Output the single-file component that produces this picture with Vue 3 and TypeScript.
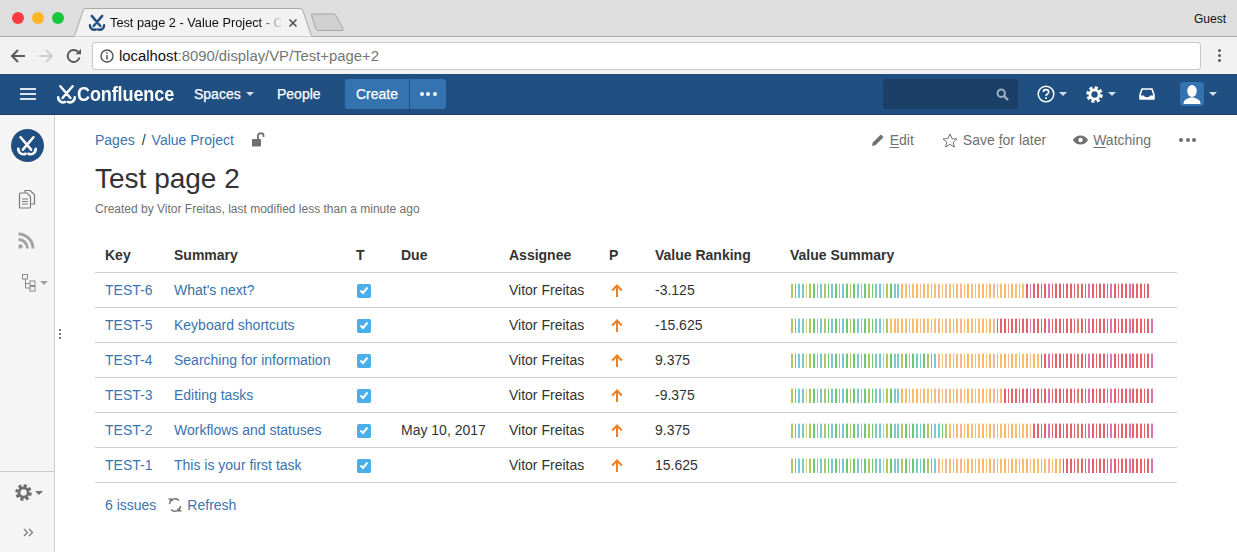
<script setup lang="ts">
const logo = 'M5 2.5 L16.5 16 M19 2.5 L7.5 16 M2.5 15 C2.5 20 7 22 10.5 20.5 M21.5 15 C21.5 20 17 22 13.5 20.5'

interface Issue {
  key: string
  summary: string
  due: string
  rank: string
  green: number
  orange: number
  total: number
}

const issues: Issue[] = [
  { key: 'TEST-6', summary: "What's next?", due: '', rank: '-3.125', green: 30, orange: 64, total: 98 },
  { key: 'TEST-5', summary: 'Keyboard shortcuts', due: '', rank: '-15.625', green: 27, orange: 56, total: 99 },
  { key: 'TEST-4', summary: 'Searching for information', due: '', rank: '9.375', green: 40, orange: 68, total: 99 },
  { key: 'TEST-3', summary: 'Editing tasks', due: '', rank: '-9.375', green: 30, orange: 58, total: 99 },
  { key: 'TEST-2', summary: 'Workflows and statuses', due: 'May 10, 2017', rank: '9.375', green: 43, orange: 66, total: 99 },
  { key: 'TEST-1', summary: 'This is your first task', due: '', rank: '15.625', green: 40, orange: 74, total: 99 },
]

const pattern = [0, 1, 2, 2, 3, 0, 1, 2, 2, 0, 1, 2, 1, 2, 2, 1, 0, 1, 2, 2, 1]
const pinks = new Set([35, 40, 42, 46, 55, 59, 65, 70])
const magentas = new Set([65, 70, 81, 87, 92, 98])

function barClass(issue: Issue, i: number): string {
  if (i < issue.green) return `bar g${pattern[i % pattern.length]}`
  if (i < issue.orange) return pinks.has(i) ? 'bar pink' : `bar o${i % 2}`
  if (magentas.has(i)) return 'bar magenta'
  return i === 78 ? 'bar brick' : `bar r${i % 2}`
}
</script>

<template>
  <div class="window">
    <header class="tabstrip">
      <div class="lights">
        <i class="light red"></i>
        <i class="light amber"></i>
        <i class="light lime"></i>
      </div>
      <div class="tab">
        <svg class="tabshape" width="240" height="29" viewBox="0 0 240 29">
          <path d="M0 28.5 C1 28.5 1.5 27.5 2 26.5 L10 3 C10.6 1.4 11.5 .5 13 .5 H227 C228.5 .5 229.4 1.4 230 3 L238 26.5 C238.5 27.5 239 28.5 240 28.5" fill="#f2f2f2" stroke="#a9a9a9" />
        </svg>
        <svg class="tablogo" width="18" height="18" viewBox="0 0 24 24">
          <path :d="logo" fill="none" stroke="#1f4f84" stroke-width="3.2" stroke-linecap="round" />
        </svg>
        <span class="tabtitle">Test page 2 - Value Project - Confluence</span>
        <svg class="tabclose" width="10" height="10" viewBox="0 0 10 10">
          <path d="M1.5 1.5 L8.5 8.5 M8.5 1.5 L1.5 8.5" stroke="#555" stroke-width="1.7" />
        </svg>
      </div>
      <svg class="newtab" width="36" height="20" viewBox="0 0 36 20">
        <path d="M2.5 1 H24 C25 1 25.5 1.5 26 2.5 L33 15.5 C33.5 17 33 17.5 32 17.5 H8 C7 17.5 6.5 17 6 16 L1.5 2.5 C1.2 1.5 1.5 1 2.5 1 Z" fill="#d0d0d0" stroke="#a5a5a5" />
      </svg>
      <span class="guest">Guest</span>
    </header>

    <div class="toolbar">
      <svg class="tool" width="16" height="16" viewBox="0 0 16 16">
        <path d="M15 8 H2 M8 2 L2 8 L8 14" fill="none" stroke="#5a5a5a" stroke-width="2" />
      </svg>
      <svg class="tool" width="16" height="16" viewBox="0 0 16 16">
        <path d="M1 8 H14 M8 2 L14 8 L8 14" fill="none" stroke="#cfcfcf" stroke-width="2" />
      </svg>
      <svg class="tool" width="16" height="16" viewBox="0 0 16 16">
        <path d="M13.5 9.5 A6 6 0 1 1 12 3.8" fill="none" stroke="#5a5a5a" stroke-width="2" />
        <path d="M9.5 6.2 H15 V.8 Z" fill="#5a5a5a" />
      </svg>
      <div class="omnibox">
        <svg width="14" height="14" viewBox="0 0 14 14">
          <circle cx="7" cy="7" r="6" fill="none" stroke="#555" stroke-width="1.4" />
          <path d="M7 6 V10.5 M7 3.2 V4.8" stroke="#555" stroke-width="1.5" />
        </svg>
        <span class="url"><span class="host">localhost</span>:8090/display/VP/Test+page+2</span>
      </div>
      <div class="menu"><i></i><i></i><i></i></div>
    </div>

    <nav class="appnav">
      <svg class="burger" width="16" height="12" viewBox="0 0 16 12">
        <path d="M0 1 H16 M0 6 H16 M0 11 H16" stroke="#fff" stroke-width="1.8" opacity=".85" />
      </svg>
      <div class="brand">
        <svg width="21" height="21" viewBox="0 0 24 24">
          <path :d="logo" fill="none" stroke="#fff" stroke-width="2.8" stroke-linecap="round" />
        </svg>
        <span class="brandname">Confluence</span>
      </div>
      <a class="navlink spaces">Spaces<i class="caret light-caret"></i></a>
      <a class="navlink people">People</a>
      <div class="createwrap">
        <button class="create">Create</button>
        <button class="create more"><i></i><i></i><i></i></button>
      </div>
      <div class="search">
        <svg width="13" height="13" viewBox="0 0 13 13">
          <circle cx="5.2" cy="5.2" r="3.7" fill="none" stroke="#9fb2c8" stroke-width="2" />
          <path d="M8 8 L12 12" stroke="#9fb2c8" stroke-width="2.4" />
        </svg>
      </div>
      <div class="navicons">
        <span class="navicon help">
          <svg width="18" height="18" viewBox="0 0 18 18">
            <circle cx="9" cy="9" r="7.8" fill="none" stroke="#fff" stroke-width="1.5" />
            <path d="M6.3 7 C6.3 3.8 11.7 3.8 11.7 7 C11.7 9 9 9 9 11" fill="none" stroke="#fff" stroke-width="1.6" />
            <path d="M9 12.2 V14" stroke="#fff" stroke-width="1.7" />
          </svg>
          <i class="caret light-caret"></i>
        </span>
        <span class="navicon gear">
          <svg width="17" height="17" viewBox="0 0 17 17">
            <circle cx="8.5" cy="8.5" r="6.6" fill="none" stroke="#fff" stroke-width="3.4" stroke-dasharray="3 2.18" />
            <circle cx="8.5" cy="8.5" r="4.6" fill="none" stroke="#fff" stroke-width="2.8" />
          </svg>
          <i class="caret light-caret"></i>
        </span>
        <span class="navicon inbox">
          <svg width="16" height="12" viewBox="0 0 16 12">
            <path d="M3 1 H13 L15 7 V11 H1 V7 Z" fill="none" stroke="#fff" stroke-width="1.6" stroke-linejoin="round" />
            <path d="M1 7.5 H5 L6 9 H10 L11 7.5 H15 V11 H1 Z" fill="#fff" />
          </svg>
        </span>
        <span class="navicon user">
          <span class="avatar">
            <svg width="24" height="24" viewBox="0 0 24 24">
              <ellipse cx="12" cy="9" rx="4.8" ry="6" fill="#fff" />
              <path d="M3.5 22 C3.5 17.5 7 17 10 15.5 H14 C17 17 20.5 17.5 20.5 22 Z" fill="#fff" />
            </svg>
          </span>
          <i class="caret light-caret"></i>
        </span>
      </div>
    </nav>

    <div class="body">
      <aside class="sidebar">
        <div class="sidetop">
          <span class="spacelogo">
            <svg width="22" height="22" viewBox="0 0 24 24">
              <path :d="logo" fill="none" stroke="#fff" stroke-width="2.8" stroke-linecap="round" />
            </svg>
          </span>
          <svg class="sideicon pages" width="18" height="20" viewBox="0 0 18 20">
            <path d="M7 3.5 V1.5 H12 L16.5 5.5 V15 H13" fill="none" stroke="#7a7a7a" stroke-width="1.2" />
            <path d="M2.5 4 H9 L12.5 7.5 V18 C12.5 18.6 12 19 11.5 19 H2.5 C2 19 1.5 18.6 1.5 18 V5 C1.5 4.4 2 4 2.5 4 Z" fill="#f5f5f5" stroke="#7a7a7a" stroke-width="1.2" />
            <path d="M4 10 H10 M4 12.5 H10 M4 15 H10" stroke="#7a7a7a" />
          </svg>
          <svg class="sideicon rss" width="17" height="17" viewBox="0 0 17 17">
            <circle cx="2.5" cy="14.5" r="2.2" fill="#a3a3a3" />
            <path d="M.5 7.5 C5.5 7.5 9.5 11.5 9.5 16.5 M.5 2 C8.5 2 15 8.5 15 16.5" fill="none" stroke="#a3a3a3" stroke-width="3" />
          </svg>
          <span class="treewrap">
            <svg class="sideicon" width="14" height="18" viewBox="0 0 14 18">
              <g fill="#f5f5f5" stroke="#8a8a8a">
                <path d="M3.5 5 V14 H8 M3.5 9.5 H8" fill="none" />
                <rect x=".5" y=".5" width="5" height="4.5" />
                <rect x="8" y="7" width="5" height="4.5" />
                <rect x="8" y="12.5" width="5" height="4.5" />
              </g>
            </svg>
            <i class="caret grey-caret"></i>
          </span>
        </div>
        <div class="sidefoot">
          <span class="sidegear">
            <svg width="17" height="17" viewBox="0 0 17 17">
              <circle cx="8.5" cy="8.5" r="6.6" fill="none" stroke="#6e6e6e" stroke-width="3.4" stroke-dasharray="3 2.18" />
              <circle cx="8.5" cy="8.5" r="4.6" fill="none" stroke="#6e6e6e" stroke-width="2.8" />
            </svg>
            <i class="caret dark-caret"></i>
          </span>
          <svg class="chev" width="11" height="9" viewBox="0 0 11 9">
            <path d="M1 1 L4.5 4.5 L1 8 M6 1 L9.5 4.5 L6 8" fill="none" stroke="#777" stroke-width="1.2" />
          </svg>
        </div>
        <div class="grip"><i></i><i></i><i></i></div>
      </aside>

      <main class="page">
        <div class="pagehead">
          <div class="crumbs">
            <a class="link">Pages</a>
            <span class="slash">/</span>
            <a class="link">Value Project</a>
            <svg class="lock" width="14" height="15" viewBox="0 0 14 15">
              <rect x="1" y="7" width="9" height="7.5" rx="1" fill="#707070" />
              <path d="M7 7 V3.5 C7 .5 12.5 .5 12.5 3.5 V5" fill="none" stroke="#707070" stroke-width="1.8" />
            </svg>
          </div>
          <div class="actions">
            <span class="action edit">
              <svg width="14" height="14" viewBox="0 0 14 14">
                <path d="M1 13 L1.8 9.6 L9.8 1.6 L12.6 4.2 L4.4 12.2 Z" fill="#707070" />
              </svg>
              <span><u>E</u>dit</span>
            </span>
            <span class="action save">
              <svg width="16" height="15" viewBox="0 0 16 15">
                <path d="M8 1 L10 5.6 L15 6 L11.2 9.2 L12.4 14 L8 11.4 L3.6 14 L4.8 9.2 L1 6 L6 5.6 Z" fill="none" stroke="#707070" stroke-width="1" />
              </svg>
              <span>Save <u>f</u>or later</span>
            </span>
            <span class="action watch">
              <svg width="15" height="10" viewBox="0 0 15 10">
                <path d="M0 5 C3 -1 12 -1 15 5 C12 11 3 11 0 5 Z" fill="#707070" />
                <circle cx="7.5" cy="5" r="2.2" fill="#fff" />
              </svg>
              <span><u>W</u>atching</span>
            </span>
            <span class="dots"><i></i><i></i><i></i></span>
          </div>
        </div>
        <h1 class="title">Test page 2</h1>
        <p class="byline">Created by Vitor Freitas, last modified less than a minute ago</p>

        <table class="issues">
          <colgroup>
            <col class="c-key" />
            <col class="c-sum" />
            <col class="c-t" />
            <col class="c-due" />
            <col class="c-asg" />
            <col class="c-p" />
            <col class="c-rank" />
            <col />
          </colgroup>
          <thead>
            <tr>
              <th>Key</th>
              <th>Summary</th>
              <th>T</th>
              <th>Due</th>
              <th>Assignee</th>
              <th>P</th>
              <th>Value Ranking</th>
              <th>Value Summary</th>
            </tr>
          </thead>
          <tbody>
            <tr v-for="issue in issues" :key="issue.key">
              <td><a class="link">{{ issue.key }}</a></td>
              <td><a class="link">{{ issue.summary }}</a></td>
              <td>
                <span class="check">
                  <svg width="10" height="9" viewBox="0 0 10 9">
                    <path d="M1.5 4.5 L4 7 L8.5 1.5" fill="none" stroke="#fff" stroke-width="2" />
                  </svg>
                </span>
              </td>
              <td>{{ issue.due }}</td>
              <td>Vitor Freitas</td>
              <td>
                <svg class="arrow" width="12" height="13" viewBox="0 0 12 13">
                  <path d="M6 13 V2 M1.2 6.5 L6 1.5 L10.8 6.5" fill="none" stroke="#ee7f22" stroke-width="2" />
                </svg>
              </td>
              <td>{{ issue.rank }}</td>
              <td>
                <div class="bars">
                  <i v-for="n in issue.total" :key="n" :class="barClass(issue, n - 1)"></i>
                </div>
              </td>
            </tr>
          </tbody>
        </table>

        <div class="tablefoot">
          <a class="link">6 issues</a>
          <svg class="refresh" width="16" height="16" viewBox="0 0 16 16">
            <path d="M2.5 7 A5.5 5.5 0 0 1 12 3.5 M13.5 9 A5.5 5.5 0 0 1 4 12.5" fill="none" stroke="#707070" stroke-width="1.5" />
            <path d="M.5 1.5 H5.5 V5 Z M15.5 14.5 H10.5 V11 Z" fill="#707070" />
          </svg>
          <a class="link">Refresh</a>
        </div>
      </main>
    </div>
  </div>
</template>

<style scoped>
.window {
  width: 1237px;
  height: 552px;
  overflow: hidden;
  display: flex;
  flex-direction: column;
  font-family: "Liberation Sans", Arial, sans-serif;
  font-size: 14px;
  color: #333;
  background: #fff;
}
i { display: block; font-style: normal; }

/* browser chrome */
.tabstrip {
  height: 36px;
  flex: none;
  background: #dedede;
  border-bottom: 1px solid #a9a9a9;
  display: flex;
  align-items: flex-end;
  padding-left: 12px;
  box-sizing: content-box;
}
.lights { display: flex; gap: 8px; align-self: flex-start; margin-top: 12px; }
.light { width: 12px; height: 12px; border-radius: 50%; }
.red { background: #fc3c3f; }
.amber { background: #fdb524; }
.lime { background: #17c83a; }
.tab {
  position: relative;
  width: 240px;
  height: 29px;
  margin-left: 9px;
  margin-bottom: -1px;
  display: flex;
  align-items: center;
  padding-left: 15px;
  box-sizing: border-box;
}
.tabshape { position: absolute; left: 0; top: 0; }
.tablogo { position: relative; flex: none; }
.tabtitle {
  position: relative;
  margin-left: 4px;
  width: 173px;
  white-space: nowrap;
  overflow: hidden;
  font-size: 12.75px;
  color: #111;
  -webkit-mask-image: linear-gradient(to right, #000 150px, transparent 173px);
  mask-image: linear-gradient(to right, #000 150px, transparent 173px);
}
.tabclose { position: relative; margin-left: 5px; flex: none; }
.newtab { margin-left: -3px; margin-bottom: 3px; flex: none; }
.guest { margin-left: auto; margin-right: 11px; align-self: flex-start; margin-top: 12px; font-size: 12px; color: #111; }

.toolbar {
  height: 37px;
  flex: none;
  background: #f2f2f2;
  display: flex;
  align-items: center;
  padding-left: 10px;
  box-sizing: border-box;
}
.tool { margin-right: 12px; flex: none; }
.omnibox {
  width: 1109px;
  height: 28px;
  margin-left: -2px;
  box-sizing: border-box;
  background: #fff;
  border: 1px solid #c8c8c8;
  border-radius: 3px;
  display: flex;
  align-items: center;
  padding-left: 7px;
  gap: 5px;
}
.url { font-size: 14.85px; color: #757575; white-space: nowrap; }
.host { color: #111; }
.menu { display: flex; flex-direction: column; gap: 2px; margin-left: 17px; }
.menu i { width: 3px; height: 3px; border-radius: 50%; background: #5a5a5a; }

/* confluence nav */
.appnav {
  height: 41px;
  flex: none;
  background: #205081;
  border-bottom: 1px solid #1b3f66;
  display: flex;
  align-items: center;
  box-sizing: border-box;
  color: #fff;
  padding-left: 20px;
}
.burger { flex: none; }
.brand { display: flex; align-items: center; margin-left: 20px; width: 138px; flex: none; }
.brand svg { flex: none; }
.brandname {
  font-size: 20px;
  font-weight: bold;
  display: inline-block;
  transform: scaleX(.9);
  transform-origin: left center;
  letter-spacing: -.1px;
  white-space: nowrap;
}
.navlink { color: #fff; display: flex; align-items: center; font-weight: normal; -webkit-text-stroke: .25px #fff; }
.spaces { gap: 5px; width: 83px; }
.people { width: 68px; }
.caret { width: 0; height: 0; border-left: 4px solid transparent; border-right: 4px solid transparent; }
.light-caret { border-top: 4px solid #d5dde7; }
.grey-caret { border-top: 4px solid #a0a0a0; }
.dark-caret { border-top: 4px solid #707070; }
.createwrap { display: flex; gap: 1px; }
.create {
  height: 30px;
  width: 64px;
  border: 0;
  padding: 0;
  background: #3572b0;
  color: #fff;
  font: 14px "Liberation Sans", Arial, sans-serif;
  -webkit-text-stroke: .25px #fff;
  border-radius: 3px 0 0 3px;
}
.more {
  width: 36px;
  border-radius: 0 3px 3px 0;
  display: flex;
  align-items: center;
  justify-content: center;
  gap: 2.5px;
}
.more i { width: 4px; height: 4px; border-radius: 50%; background: #fff; }
.search {
  margin-left: 437px;
  width: 135px;
  height: 30px;
  background: #1b3f66;
  border-radius: 3px;
  display: flex;
  align-items: center;
  justify-content: flex-end;
  padding-right: 9px;
  box-sizing: border-box;
}
.navicons { display: flex; align-items: center; margin-left: 19px; }
.navicon { display: flex; align-items: center; gap: 4px; }
.gear { margin-left: 19px; gap: 5px; }
.inbox { margin-left: 23px; }
.user { margin-left: 25px; gap: 5px; }
.avatar {
  width: 24px;
  height: 24px;
  background: #3572b0;
  border-radius: 3px;
  overflow: hidden;
  display: block;
}
.avatar svg { display: block; }

/* layout */
.body { flex: 1; display: flex; min-height: 0; }
.sidebar {
  position: relative;
  width: 55px;
  flex: none;
  box-sizing: border-box;
  background: #f5f5f5;
  border-right: 1px solid #ccc;
  display: flex;
  flex-direction: column;
  justify-content: space-between;
}
.sidetop { display: flex; flex-direction: column; align-items: center; padding-top: 14px; }
.spacelogo {
  width: 33px;
  height: 33px;
  border-radius: 50%;
  background: #205081;
  display: flex;
  align-items: center;
  justify-content: center;
}
.sideicon { display: block; }
.pages { margin-top: 27px; margin-right: 1px; }
.rss { margin-top: 23px; margin-right: 1px; }
.treewrap { display: flex; align-items: center; gap: 4px; margin-top: 25px; margin-left: 16px; }
.sidefoot {
  height: 81px;
  box-sizing: border-box;
  border-top: 1px solid #ccc;
  display: flex;
  flex-direction: column;
  align-items: center;
  padding-top: 12px;
}
.sidegear { display: flex; align-items: center; gap: 3px; margin-left: 4px; }
.chev { margin-top: 27px; margin-left: 2px; }
.grip { position: absolute; left: 59px; top: 214px; display: flex; flex-direction: column; gap: 2px; }
.grip i { width: 2px; height: 2px; background: #777; }

/* page */
.page { flex: 1; min-width: 0; padding: 15px 60px 0 40px; box-sizing: border-box; }
.link { color: #3b73af; }
.pagehead { display: flex; justify-content: space-between; align-items: center; height: 20px; }
.crumbs { display: flex; align-items: center; }
.slash { margin: 0 6px 0 7px; }
.lock { margin-left: 17px; margin-top: -2px; }
.actions { display: flex; align-items: center; color: #707070; }
.action { display: flex; align-items: center; gap: 5px; }
.save { margin-left: 28px; }
.watch { margin-left: 27px; }
.dots { display: flex; gap: 2.5px; margin-left: 28px; margin-right: -19px; }
.dots i { width: 4px; height: 4px; border-radius: 50%; background: #707070; }
.actions u { text-underline-offset: 2px; }
.title {
  margin: 13px 0 0;
  font-size: 28px;
  line-height: 32px;
  font-weight: normal;
  color: #333;
}
.byline { margin: 6px 0 0; font-size: 12px; line-height: 16px; color: #707070; }
.issues {
  margin-top: 20px;
  width: 1082px;
  table-layout: fixed;
  border-collapse: collapse;
}
.c-key { width: 69px; }
.c-sum { width: 182px; }
.c-t { width: 45px; }
.c-due { width: 108px; }
.c-asg { width: 100px; }
.c-p { width: 46px; }
.c-rank { width: 135px; }
.issues th {
  height: 35px;
  padding: 0 10px;
  text-align: left;
  font-weight: bold;
  color: #333;
  border-bottom: 1px solid #ccc;
}
.issues td {
  height: 35px;
  padding: 0 10px;
  box-sizing: border-box;
  border-bottom: 1px solid #ccc;
  color: #333;
  white-space: nowrap;
}
.check {
  width: 14px;
  height: 14px;
  margin-left: 1px;
  margin-top: 1px;
  background: #4aaee8;
  border-radius: 2px;
  display: flex;
  align-items: center;
  justify-content: center;
}
.arrow { display: block; margin-left: 2px; }
.bars { display: flex; margin-left: 1px; }
.bar {
  flex: none;
  width: 1.7px;
  height: 15px;
  margin-right: 1.99px;
  box-sizing: border-box;
  border-top: 1px solid rgba(255, 255, 255, .65);
  opacity: .85;
}
.g0 { background: #a3bf4a; }
.g1 { background: #55bf5a; }
.g2 { background: #62c3c6; }
.g3 { background: #cfc45c; }
.o0 { background: #f8ad45; }
.o1 { background: #f9b559; }
.pink { background: #f3aa8c; }
.r0 { background: #e0464d; }
.r1 { background: #dc4a58; }
.magenta { background: #d45fa6; }
.brick { background: #cf7350; }
.tablefoot { display: flex; align-items: center; margin-top: 14px; padding-left: 10px; }
.refresh { margin: 0 4px 0 11px; }
</style>

<style>
html, body { margin: 0; overflow: hidden; }
</style>
